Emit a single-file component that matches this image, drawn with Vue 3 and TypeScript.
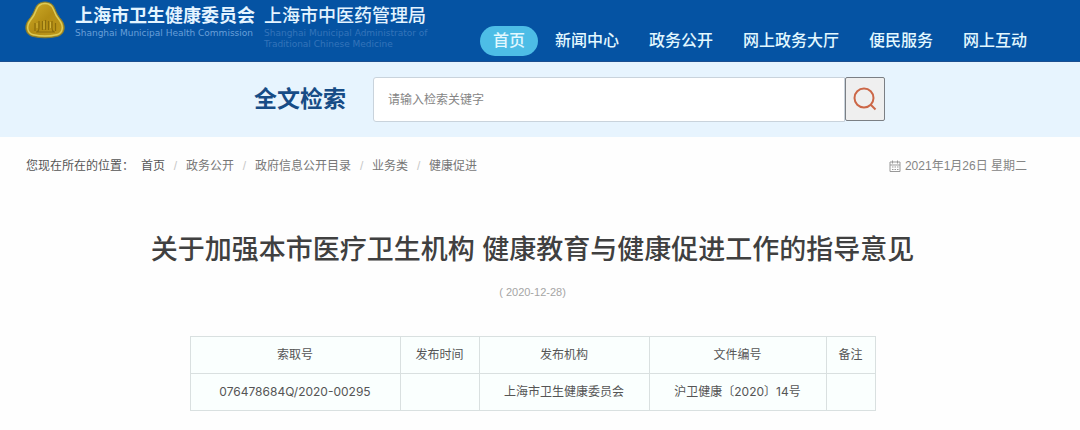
<script setup lang="ts">
import { ref } from 'vue'

const keyword = ref('')
const navItems: string[] = ['首页', '新闻中心', '政务公开', '网上政务大厅', '便民服务', '网上互动']
const crumbs: string[] = ['首页', '政务公开', '政府信息公开目录', '业务类', '健康促进']
const columns: { label: string; name: string }[] = [
  { label: '索取号', name: 'index' },
  { label: '发布时间', name: 'time' },
  { label: '发布机构', name: 'agency' },
  { label: '文件编号', name: 'number' },
  { label: '备注', name: 'note' },
]
const record: string[] = ['076478684Q/2020-00295', '', '上海市卫生健康委员会', '沪卫健康〔2020〕14号', '']
</script>

<template>
  <div class="page">
    <header class="header">
      <div class="brand">
        <svg class="emblem" viewBox="0 0 40 38" aria-hidden="true">
          <defs>
            <linearGradient id="gold" x1="0" y1="0" x2="1" y2="1">
              <stop offset="0" stop-color="#d2b02c" />
              <stop offset="0.5" stop-color="#b38d14" />
              <stop offset="1" stop-color="#bf991c" />
            </linearGradient>
          </defs>
          <path d="M20 1C25 1 28.500 3.500 30 8C31.500 12 33.500 15.500 36.500 19C41.500 25.500 39.500 34 32 35.500C24 37.300 16 37.300 8 35.500C0.500 34 -1.500 25.500 3.500 19C6.500 15.500 8.500 12 10 8C11.500 3.500 15 1 20 1Z" fill="url(#gold)" stroke="#7d7a35" stroke-width="1" />
          <path d="M20 2.500C24 2.500 27 4.500 28.500 8.500C30 13 32 16.500 35 20C39 26 37.500 32.500 31.500 33.700C24 35.300 16 35.300 8.500 33.700C2.500 32.500 1 26 5 20C8 16.500 10 13 11.500 8.500C13 4.500 16 2.500 20 2.500Z" fill="none" stroke="#dccb58" stroke-width="1.500" />
          <path d="M10 22v8M14 20v7q0 3 -2 4M17.500 20v9M20.500 19v10M23.500 20v9M27 20v7q0 3 2 4M30.500 22v8M11 31h19" fill="none" stroke="#8b6d0c" stroke-width="1.200" />
          <path d="M12 22v5M19 20v8M25.500 21v6" fill="none" stroke="#d9bc40" stroke-width="0.900" />
        </svg>
        <div class="org">
          <strong class="org-name">上海市卫生健康委员会</strong>
          <span class="org-en">Shanghai Municipal Health Commission</span>
        </div>
        <div class="org second">
          <span class="org-name">上海市中医药管理局</span>
          <span class="org-en">Shanghai Municipal Administrator of</span>
          <span class="org-en">Traditional Chinese Medicine</span>
        </div>
      </div>
      <nav class="nav">
        <a v-for="(item, i) in navItems" :key="item" href="#" :class="{ active: i === 0 }">{{ item }}</a>
      </nav>
    </header>

    <form class="search" @submit.prevent>
      <label for="keyword">全文检索</label>
      <input id="keyword" v-model="keyword" type="text" placeholder="请输入检索关键字" />
      <button type="submit" aria-label="检索">
        <svg viewBox="0 0 24 24" aria-hidden="true">
          <circle cx="11" cy="11" r="9.500" />
          <path d="M17.500 17.500L22.500 22.500" />
        </svg>
      </button>
    </form>

    <div class="location">
      <nav class="crumbs">
        <span class="lead">您现在所在的位置：</span>
        <template v-for="(crumb, i) in crumbs" :key="crumb">
          <span v-if="i > 0" class="slash">/</span>
          <a href="#" :class="{ home: i === 0 }">{{ crumb }}</a>
        </template>
      </nav>
      <div class="today">
        <svg viewBox="0 0 12 12" aria-hidden="true">
          <path d="M1 2h10v9.500H1zM1 5h10M3.500 0.500v3M8.500 0.500v3M3 7h1.500M5.500 7h1.500M8 7h1.500M3 9.500h1.500M5.500 9.500h1.500M8 9.500h1.500" />
        </svg>
        <time datetime="2021-01-26">2021年1月26日 星期二</time>
      </div>
    </div>

    <main class="article">
      <h1>关于加强本市医疗卫生机构 健康教育与健康促进工作的指导意见</h1>
      <p class="published">( 2020-12-28)</p>
      <table>
        <colgroup>
          <col v-for="column in columns" :key="column.name" :class="column.name" />
        </colgroup>
        <thead>
          <tr>
            <th v-for="column in columns" :key="column.name" scope="col">{{ column.label }}</th>
          </tr>
        </thead>
        <tbody>
          <tr>
            <td v-for="(value, i) in record" :key="i">{{ value }}</td>
          </tr>
        </tbody>
      </table>
    </main>
  </div>
</template>

<style>
body {
  margin: 0;
  background: #fefefe;
}
</style>

<style scoped>
.page {
  font-family: "Liberation Sans", "Noto Sans CJK SC", sans-serif;
  font-size: 12px;
  line-height: 20px;
  color: #555;
}
a {
  color: inherit;
  text-decoration: none;
}
.header {
  display: flex;
  justify-content: space-between;
  height: 62px;
  padding: 0 40px 0 24px;
  box-sizing: border-box;
  background: #0553a3;
  border-bottom: 1px solid #1b4f90;
}
.brand {
  display: flex;
}
.emblem {
  width: 42px;
  height: 38px;
  margin: 1px 9px 0 0;
}
.org {
  display: flex;
  flex-direction: column;
  padding-top: 4px;
  white-space: nowrap;
}
.org.second {
  margin-left: 9px;
}
.org-name {
  font-size: 18px;
  line-height: 24px;
  font-weight: 700;
  color: #e4f4ff;
}
.second .org-name {
  font-weight: 500;
}
.org-en {
  font-family: "DejaVu Sans", sans-serif;
  font-size: 9px;
  line-height: 11px;
  color: #689fd8;
}
.second .org-en {
  color: #3474ba;
}
.nav {
  display: flex;
  align-items: flex-start;
  gap: 4px;
  padding-top: 26px;
}
.nav a {
  padding: 0 13px;
  border-radius: 15px;
  font-size: 16px;
  line-height: 30px;
  font-weight: 500;
  color: #e2f8ff;
  white-space: nowrap;
}
.nav .active {
  background: #4dbde6;
}
.search {
  display: flex;
  align-items: flex-start;
  padding: 15px 195px 15px 254px;
  background: #e7f4fe;
}
.search label {
  margin-right: 27px;
  font-size: 23px;
  line-height: 44px;
  font-weight: 700;
  color: #174c86;
  white-space: nowrap;
}
.search input {
  flex: 1;
  min-width: 0;
  height: 45px;
  padding: 0 14px;
  box-sizing: border-box;
  border: 1px solid #c9d3dc;
  border-radius: 3px 0 0 3px;
  background: #fff;
  font: inherit;
}
.search input::placeholder {
  color: #858585;
}
.search button {
  display: flex;
  align-items: center;
  justify-content: center;
  width: 40px;
  height: 44px;
  padding: 0;
  border: 1px solid #7b7f84;
  border-radius: 2px;
  background: #efefef;
}
.search svg {
  width: 24px;
  height: 24px;
  fill: none;
  stroke: #cc6747;
  stroke-width: 2;
}
.location {
  display: flex;
  justify-content: space-between;
  padding: 19px 53px 0 26px;
}
.crumbs {
  display: flex;
  color: #777;
}
.lead {
  width: 115px;
  color: #555;
}
.home {
  color: #555;
}
.slash {
  width: 21px;
  text-align: center;
  color: #c8c8c8;
}
.today {
  display: flex;
  align-items: center;
  gap: 4px;
  color: #858585;
}
.today svg {
  width: 12px;
  height: 12px;
  fill: none;
  stroke: #999;
  stroke-width: 1;
}
.article {
  padding: 54px 15px 19px 0;
  text-align: center;
}
h1 {
  margin: 0;
  font-size: 27px;
  line-height: 40px;
  font-weight: 500;
  color: #404040;
}
.published {
  margin: 12px 0 34px;
  font-size: 11px;
  color: #a5a5a5;
}
table {
  width: 685px;
  margin: 0 auto;
  table-layout: fixed;
  border-collapse: collapse;
  background: #fafffe;
  font-family: Inter, "Noto Sans CJK SC", sans-serif;
}
.index { width: 210px; }
.time { width: 79px; }
.agency { width: 170px; }
.number { width: 177px; }
.note { width: 49px; }
th,
td {
  height: 36px;
  padding: 0;
  border: 1px solid #d9e0e0;
  font-weight: 400;
}
</style>
